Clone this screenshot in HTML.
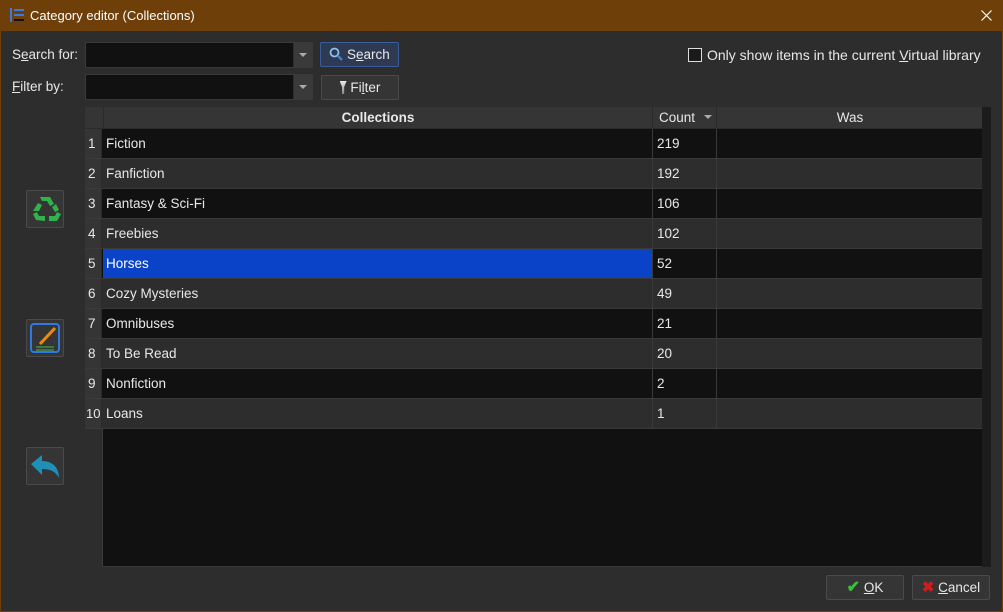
<!DOCTYPE html>
<html><head><style>
*{margin:0;padding:0;box-sizing:border-box}
body{width:1003px;height:612px;background:#6f3f0a;font-family:"Liberation Sans",sans-serif;font-size:13.5px;color:#e8e8e8;position:relative;overflow:hidden}
.a{position:absolute}
#win{left:1px;top:31px;width:1001px;height:580px;background:#2d2d2d}
.combo{background:#111;border:1px solid #3a3a3a;height:26px}
.combo .dd{position:absolute;right:0;top:0;width:19px;height:24px;background:#3a3a3a;border-left:1px solid #2d2d2d}
.combo .dd:after{content:"";position:absolute;left:5px;top:10px;border-left:4px solid transparent;border-right:4px solid transparent;border-top:4px solid #aaa}
.btn{background:#353535;border:1px solid #4a4a4a;border-radius:2px;height:25px;text-align:center;line-height:23px}
u{text-decoration:underline}
.row{position:absolute;left:85px;width:897px;height:30px;border-bottom:1px solid #3a3a3a}
.row div{position:absolute;top:0;height:29px;line-height:29px}
.n{left:0;width:17px;background:#353535;padding-left:3px;border-right:1px solid #2a2a2a}
.c1{left:18px;width:550px;padding-left:3px;border-right:1px solid #3a3a3a}
.c2{left:569px;width:63px;padding-left:3px;border-right:1px solid #3a3a3a}
.ib{width:38px;height:38px;background:#353535;border:1px solid #4a4a4a;border-radius:2px}
</style></head><body>
<div class="a" style="left:10px;top:8px;width:14px;height:16px">
<div class="a" style="left:4px;top:1px;width:10px;height:2px;background:#3b7be0"></div>
<div class="a" style="left:4px;top:6px;width:10px;height:2px;background:#3b7be0"></div>
<div class="a" style="left:4px;top:11px;width:10px;height:2px;background:#111"></div>
<div class="a" style="left:0;top:0;width:2px;height:14px;background:#3b7be0"></div>
</div>
<div class="a" style="left:30px;top:8px;font-size:13px;color:#fff">Category editor (Collections)</div>
<svg class="a" style="left:981px;top:10px" width="11" height="11" viewBox="0 0 11 11"><path d="M0.5 0.5l10 10M10.5 0.5l-10 10" stroke="#fff" stroke-width="1.2"/></svg>
<div id="win" class="a"></div>
<div class="a" style="left:12px;top:47px">S<u>e</u>arch for:</div>
<div class="a combo" style="left:85px;top:42px;width:228px"><div class="dd"></div></div>
<div class="a btn" style="left:320px;top:42px;width:79px;border-color:#3b5c9c;background:#2e3a52"><svg width="14" height="14" style="vertical-align:-2px" viewBox="0 0 14 14"><circle cx="5.5" cy="5.5" r="4" fill="none" stroke="#8fc0f0" stroke-width="1.8"/><path d="M8.5 8.5l4.5 4.5" stroke="#3a7fd0" stroke-width="2.5"/></svg> S<u>e</u>arch</div>
<div class="a" style="left:688px;top:48px;width:14px;height:14px;border:1px solid #ddd;background:#1a1a1a"></div>
<div class="a" style="left:707px;top:47px;font-size:14px">Only show items in the current <u>V</u>irtual library</div>
<div class="a" style="left:12px;top:79px"><u>F</u>ilter by:</div>
<div class="a combo" style="left:85px;top:74px;width:228px"><div class="dd"></div></div>
<div class="a btn" style="left:321px;top:75px;width:78px"><span style="display:inline-block;width:7px;height:13px;vertical-align:-2px;background:linear-gradient(#eee,#888);clip-path:polygon(0 0,100% 0,65% 45%,65% 100%,35% 100%,35% 45%)"></span> Fi<u>l</u>ter</div>
<div class="a" style="left:85px;top:107px;width:906px;height:460px;background:#111;border:1px solid #3a3a3a"></div>
<div class="a" style="left:85px;top:107px;width:18px;height:460px;background:#2d2d2d;border-right:1px solid #3a3a3a"></div>
<div class="a" style="left:982px;top:107px;width:9px;height:460px;background:#1c1c1c"></div>
<div class="a" style="left:85px;top:107px;width:897px;height:22px;background:#353535;border-bottom:1px solid #2a2a2a">
<div class="a" style="left:18px;width:550px;height:21px;line-height:21px;text-align:center;font-weight:bold;border-left:1px solid #2a2a2a;border-right:1px solid #2a2a2a">Collections</div>
<div class="a" style="left:569px;width:63px;height:21px;line-height:21px;padding-left:5px;border-right:1px solid #2a2a2a">Count<span class="a" style="right:4px;top:8px;border-left:4px solid transparent;border-right:4px solid transparent;border-top:4px solid #aaa"></span></div>
<div class="a" style="left:633px;width:264px;height:21px;line-height:21px;text-align:center">Was</div>
</div>
<div class="row" style="top:129px;background:#111"><div class="n">1</div><div class="c1">Fiction</div><div class="c2">219</div></div>
<div class="row" style="top:159px;background:#2d2d2d"><div class="n">2</div><div class="c1">Fanfiction</div><div class="c2">192</div></div>
<div class="row" style="top:189px;background:#111"><div class="n">3</div><div class="c1">Fantasy &amp; Sci-Fi</div><div class="c2">106</div></div>
<div class="row" style="top:219px;background:#2d2d2d"><div class="n">4</div><div class="c1">Freebies</div><div class="c2">102</div></div>
<div class="row" style="top:249px;background:#111"><div class="n">5</div><div class="c1" style="background:#0a43c8;color:#fff">Horses</div><div class="c2">52</div></div>
<div class="row" style="top:279px;background:#2d2d2d"><div class="n">6</div><div class="c1">Cozy Mysteries</div><div class="c2">49</div></div>
<div class="row" style="top:309px;background:#111"><div class="n">7</div><div class="c1">Omnibuses</div><div class="c2">21</div></div>
<div class="row" style="top:339px;background:#2d2d2d"><div class="n">8</div><div class="c1">To Be Read</div><div class="c2">20</div></div>
<div class="row" style="top:369px;background:#111"><div class="n">9</div><div class="c1">Nonfiction</div><div class="c2">2</div></div>
<div class="row" style="top:399px;background:#2d2d2d"><div class="n" style="padding-left:1px;font-size:13px">10</div><div class="c1">Loans</div><div class="c2">1</div></div>
<div class="a ib" style="left:26px;top:190px"><svg width="36" height="36" viewBox="0 0 36 36"><g fill="#2fb34a"><path d="M13 6h10l4 7-4 2-3-5h-5z"/><path d="M6 20l5-8 4 2-3 6z"/><path d="M9 29l-3-6 4-2 2 4h6v5z"/><path d="M22 30v-5h6l2-4 4 2-4 7z"/><path d="M29 13l3 6-4 2-3-5z"/></g></svg></div>
<div class="a ib" style="left:26px;top:319px"><svg width="36" height="36" viewBox="0 0 36 36"><rect x="4" y="4" width="28" height="28" rx="3" fill="none" stroke="#2e7ae0" stroke-width="2"/><path d="M13 24L28 8" stroke="#f08a00" stroke-width="3"/><path d="M9 27h18M9 30h18" stroke="#3fc04a" stroke-width="1"/></svg></div>
<div class="a ib" style="left:26px;top:447px"><svg width="36" height="36" viewBox="0 0 36 36"><path d="M4 16L15 7v6c10 0 17 6 17 17c-3-6-8-9-17-9v6z" fill="#1f8fb8"/></svg></div>
<div class="a btn" style="left:826px;top:575px;width:78px;height:25px"><span style="color:#3ac03a;font-size:16px;font-weight:bold">✔</span> <u>O</u>K</div>
<div class="a btn" style="left:912px;top:575px;width:78px;height:25px"><span style="color:#d01c1c;font-size:15px;font-weight:bold">✖</span> <u>C</u>ancel</div>
</body></html>
